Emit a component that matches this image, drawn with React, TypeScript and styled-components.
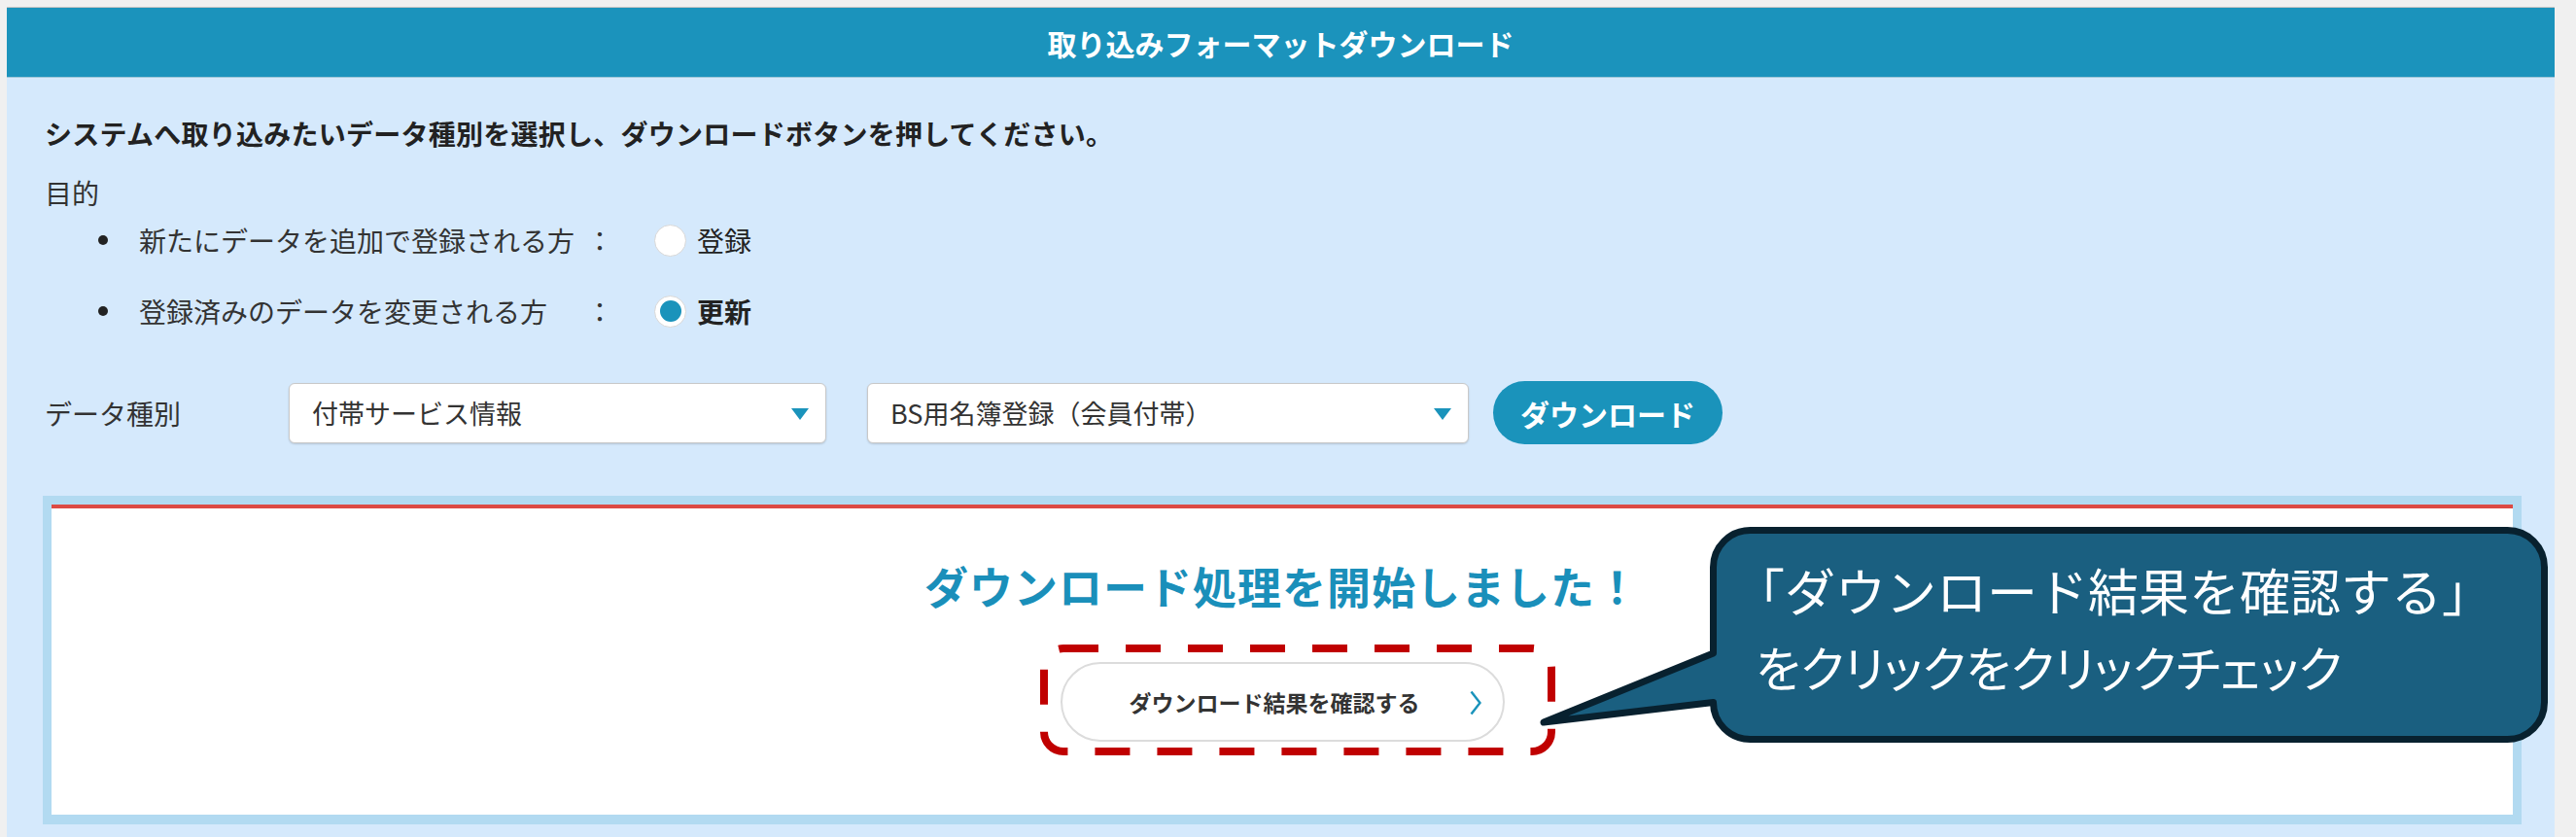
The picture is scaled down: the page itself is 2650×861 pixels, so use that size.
import styled, { createGlobalStyle } from "styled-components"

const GlobalStyle = createGlobalStyle`
  html, body {
    margin: 0;
    padding: 0;
    background: #f0f0f0;
  }
  body {
    font-family: "Noto Sans CJK JP", "Noto Sans", sans-serif;
    color: #333;
  }
  * {
    box-sizing: border-box;
  }
`

const options = [
    { label: "新たにデータを追加で登録される方", value: "登録", checked: false },
    { label: "登録済みのデータを変更される方", value: "更新", checked: true },
]

const App = () => {
    return (
        <>
            <GlobalStyle />
            <Root>
                <Panel>
                    <Header>取り込みフォーマットダウンロード</Header>
                    <Body>
                        <Lead>システムへ取り込みたいデータ種別を選択し、ダウンロードボタンを押してください。</Lead>
                        <Purpose>目的</Purpose>
                        <OptionList>
                            {options.map((o, key) => (
                                <OptionItem key={key}>
                                    <OptionLabel>{o.label}</OptionLabel>
                                    <Colon>：</Colon>
                                    <Radio $checked={o.checked} />
                                    <RadioText $checked={o.checked}>{o.value}</RadioText>
                                </OptionItem>
                            ))}
                        </OptionList>
                        <DataRow>
                            <DataLabel>データ種別</DataLabel>
                            <Select $width={553}>付帯サービス情報</Select>
                            <Select $width={619} $gap={42}>BS用名簿登録（会員付帯）</Select>
                            <DownloadButton>ダウンロード</DownloadButton>
                        </DataRow>
                        <ResultBox>
                            <ResultInner>
                                <Title>ダウンロード処理を開始しました！</Title>
                                <ConfirmWrap>
                                    <ConfirmButton>
                                        ダウンロード結果を確認する
                                        <Chevron viewBox="0 0 12 26">
                                            <polyline points="1.5,1.5 10.5,13 1.5,24.5" />
                                        </Chevron>
                                    </ConfirmButton>
                                    <DashedFrame viewBox="0 0 530 114">
                                        <rect x="4" y="4" width="522" height="106" rx="20" ry="20" />
                                    </DashedFrame>
                                </ConfirmWrap>
                            </ResultInner>
                        </ResultBox>
                    </Body>
                </Panel>
                <Callout>
                    <CalloutShape viewBox="0 0 1045 235">
                        <path d="M 220.5 10.5 H 999.5 A 38 38 0 0 1 1037.5 48.5 V 187.5 A 38 38 0 0 1 999.5 225.5 H 220.5 A 38 38 0 0 1 182.5 187.5 L 8 208 L 182.5 137 V 48.5 A 38 38 0 0 1 220.5 10.5 Z" />
                    </CalloutShape>
                    <CalloutText>
                        <CalloutLine $size={52} $shift={-22}>「ダウンロード結果を確認する」</CalloutLine>
                        <CalloutLine $size={50} $palt>をクリックをクリックチェック</CalloutLine>
                    </CalloutText>
                </Callout>
            </Root>
        </>
    )
}

export default App

const Root = styled.div`
    position: relative;
    width: 2650px;
    height: 861px;
    overflow: hidden;
    padding: 7px 22px 0 7px;
`

const Panel = styled.section`
    display: flex;
    flex-direction: column;
    height: 100%;
    background-color: #d5e9fc;
`

const Header = styled.header`
    height: 73px;
    display: flex;
    align-items: center;
    justify-content: center;
    border-top: 1px solid #c4c4c4;
    border-bottom: 1px solid #9ec6d8;
    background-color: #1b93bc;
    color: #fff;
    font-size: 30px;
    font-weight: 700;
`

const Body = styled.div`
    flex: 1;
    padding: 37px 34px 0 39px;
`

const Lead = styled.p`
    margin: 0;
    font-size: 28px;
    line-height: 40px;
    font-weight: 700;
    letter-spacing: 0.25px;
    color: #222;
`

const Purpose = styled.p`
    margin: 21px 0 0;
    font-size: 28px;
    line-height: 40px;
    color: #333;
`

const OptionList = styled.ul`
    list-style: none;
    margin: 9px 0 0;
    padding: 0 0 0 55px;
    display: flex;
    flex-direction: column;
    gap: 33px;
`

const OptionItem = styled.li`
    display: flex;
    align-items: center;
    height: 40px;
    font-size: 28px;
    color: #333;

    &::before {
        content: "";
        width: 10px;
        height: 10px;
        margin-right: 32px;
        border-radius: 50%;
        background-color: #222;
    }
`

const OptionLabel = styled.span`
    width: 460px;
`

const Colon = styled.span`
    width: 28px;
    text-align: center;
`

const Radio = styled.span<{ $checked: boolean }>`
    margin-left: 42px;
    width: 33px;
    height: 33px;
    display: flex;
    align-items: center;
    justify-content: center;
    border-radius: 50%;
    border: 1.5px solid #d8d8d8;
    background-color: #fff;

    &::after {
        content: "";
        width: 22px;
        height: 22px;
        border-radius: 50%;
        background-color: ${(p) => (p.$checked ? "#1a93bb" : "transparent")};
    }
`

const RadioText = styled.span<{ $checked: boolean }>`
    margin-left: 11px;
    font-weight: ${(p) => (p.$checked ? 700 : 400)};
    color: #222;
`

const DataRow = styled.div`
    display: flex;
    align-items: center;
    height: 65px;
    margin-top: 52px;
`

const DataLabel = styled.span`
    width: 251px;
    font-size: 28px;
    color: #333;
`

const Select = styled.div<{ $width: number; $gap?: number }>`
    position: relative;
    width: ${(p) => p.$width}px;
    height: 62px;
    margin-left: ${(p) => p.$gap ?? 0}px;
    display: flex;
    align-items: center;
    padding-left: 23px;
    border: 1px solid #c9c9c9;
    border-radius: 6px;
    background-color: #fff;
    box-shadow: 0 1px 2px rgba(0, 0, 0, 0.15);
    font-size: 27px;
    color: #333;

    &::after {
        content: "";
        position: absolute;
        right: 17px;
        top: 25px;
        border-left: 9px solid transparent;
        border-right: 9px solid transparent;
        border-top: 12px solid #1a93bb;
    }
`

const DownloadButton = styled.button`
    margin-left: 25px;
    width: 236px;
    height: 65px;
    border: none;
    border-radius: 33px;
    background-color: #1a93bb;
    color: #fff;
    font-family: inherit;
    font-size: 30px;
    font-weight: 700;
`

const ResultBox = styled.div`
    margin: 53px 0 0 -2px;
    border: 9px solid #b2daf1;
    border-bottom-width: 10px;
    background-color: #fff;
`

const ResultInner = styled.div`
    border-top: 4px solid #dc4a43;
    padding: 49px 0 75px;
    display: flex;
    flex-direction: column;
    align-items: center;
`

const Title = styled.h2`
    margin: 0;
    font-size: 45px;
    line-height: 62px;
    font-weight: 700;
    letter-spacing: 1px;
    color: #1a8fba;
`

const ConfirmWrap = styled.div`
    position: relative;
    margin-top: 47px;
`

const ConfirmButton = styled.button`
    position: relative;
    width: 457px;
    height: 82px;
    display: flex;
    align-items: center;
    justify-content: center;
    padding: 0 16px 0 0;
    border: 2px solid #dcdcdc;
    border-radius: 41px;
    background-color: #fff;
    color: #333;
    font-family: inherit;
    font-size: 23px;
    font-weight: 700;
`

const Chevron = styled.svg`
    position: absolute;
    right: 22px;
    top: 27px;
    width: 12px;
    height: 26px;
    fill: none;
    stroke: #1a93bb;
    stroke-width: 2.5;
`

const DashedFrame = styled.svg`
    position: absolute;
    left: -21px;
    top: -18px;
    width: 530px;
    height: 114px;
    pointer-events: none;

    rect {
        fill: none;
        stroke: #c00000;
        stroke-width: 8;
        stroke-dasharray: 36 28;
    }
`

const Callout = styled.div`
    position: absolute;
    left: 1580px;
    top: 535px;
    width: 1045px;
    height: 235px;
`

const CalloutShape = styled.svg`
    position: absolute;
    inset: 0;
    width: 100%;
    height: 100%;

    path {
        fill: #1a5f80;
        stroke: #08212f;
        stroke-width: 7;
        stroke-linejoin: round;
    }
`

const CalloutText = styled.div`
    position: relative;
    padding: 33px 0 0 226px;
    color: #fff;
`

const CalloutLine = styled.p<{ $size: number; $palt?: boolean; $shift?: number }>`
    margin: 0 0 0 ${(p) => p.$shift ?? 0}px;
    font-size: ${(p) => p.$size}px;
    line-height: 78px;
    font-weight: 400;
    font-feature-settings: ${(p) => (p.$palt ? '"palt"' : "normal")};
    white-space: nowrap;
`
